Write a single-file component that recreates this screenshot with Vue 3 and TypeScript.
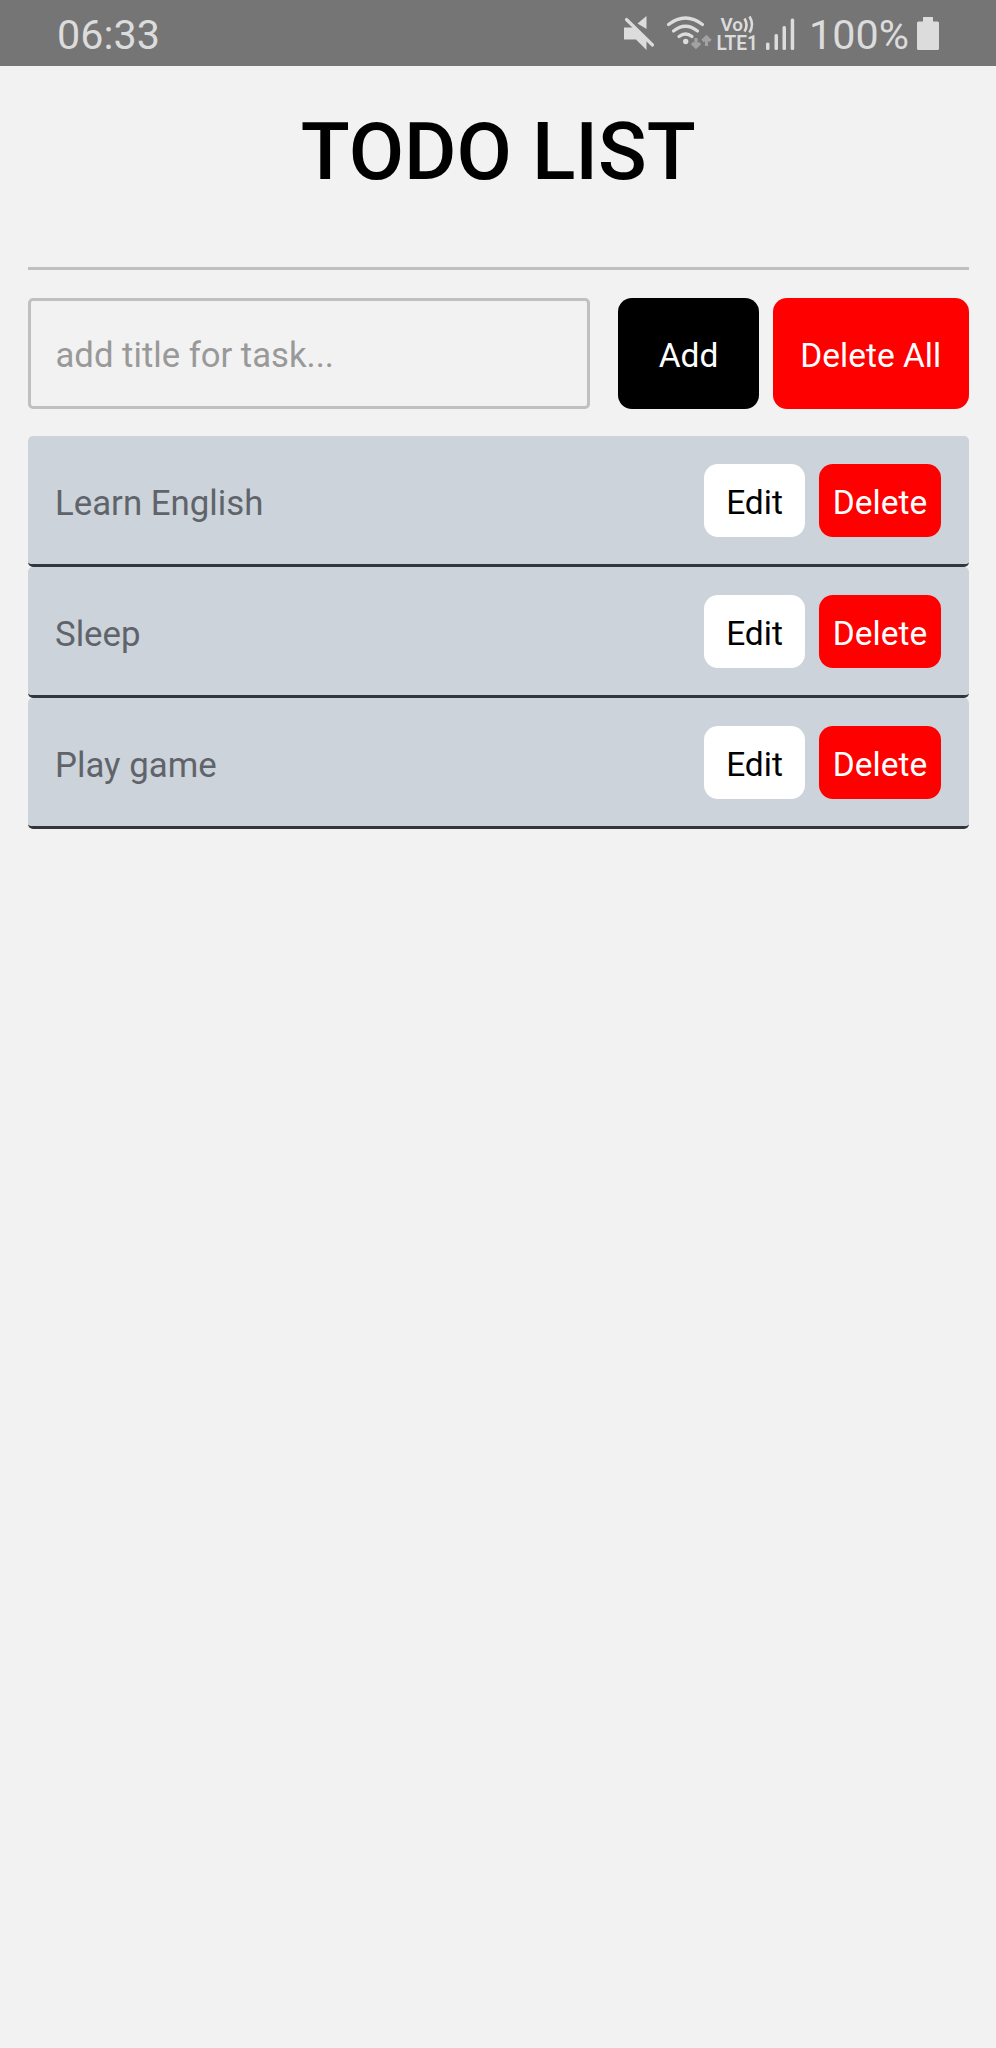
<script setup lang="ts">
import { ref } from 'vue'

interface Task {
  id: number
  title: string
}

const title = ref('')
const tasks = ref<Task[]>([
  { id: 1, title: 'Learn English' },
  { id: 2, title: 'Sleep' },
  { id: 3, title: 'Play game' },
])

function addTask(): void {
  const text = title.value.trim()
  if (!text) return
  tasks.value.push({ id: Date.now(), title: text })
  title.value = ''
}

function editTask(task: Task): void {
  title.value = task.title
  removeTask(task.id)
}

function removeTask(id: number): void {
  tasks.value = tasks.value.filter((t) => t.id !== id)
}

function clearTasks(): void {
  tasks.value = []
}
</script>

<template>
  <div class="screen">
    <header class="status">
      <span class="clock">06:33</span>
      <svg class="indicators" width="180" height="66" viewBox="620 0 180 66" fill="#dcdcdc">
        <!-- muted speaker -->
        <path d="M624 27.500h10.500l12 11.500v11l-10.500-10.500h-12z" />
        <path d="M637.500 23.500l9-7.500v13z" />
        <path d="M626.500 19.500l26 25.500" stroke="#dcdcdc" stroke-width="3.200" stroke-linecap="round" />
        <!-- wifi -->
        <g fill="none" stroke="#dcdcdc" stroke-width="3.200" stroke-linecap="round">
          <path d="M668.500 24.500q17-13 34 0" />
          <path d="M673.500 31q12-9.500 24 0" />
          <path d="M679 36.500q6.500-5 13 0" />
        </g>
        <circle cx="685.700" cy="41.500" r="2.700" />
        <g fill="none" stroke="#a2a2a2" stroke-width="3.200">
          <path d="M696 38v9M692 43l4 4 4-4" />
          <path d="M706.500 46v-9M702.500 41l4-4 4 4" />
        </g>
        <!-- voice over LTE -->
        <g class="volte">
          <text x="720.500" y="31" font-size="18.500" textLength="22.500" lengthAdjust="spacingAndGlyphs">Vo</text>
          <text x="716.500" y="50" font-size="19.500" textLength="41.500" lengthAdjust="spacingAndGlyphs">LTE1</text>
        </g>
        <g fill="none" stroke="#dcdcdc" stroke-width="2.600">
          <path d="M744.500 18.500q4 6.500 0 13" />
          <path d="M749.500 16.500q5 8 0 16" />
        </g>
        <!-- signal strength -->
        <rect x="766" y="42.500" width="3.500" height="7.500" rx="1.500" />
        <rect x="774.500" y="34" width="3.500" height="16" rx="1.500" />
        <rect x="782.500" y="26" width="3.500" height="24" rx="1.500" />
        <rect x="790.700" y="18.500" width="3.500" height="31.500" rx="1.500" />
      </svg>
      <span class="percent">100%</span>
      <svg class="battery" width="24" height="35" viewBox="0 0 24 35" fill="#dcdcdc">
        <path d="M7 1h10v4.500h4.500q1.500 0 1.500 1.500v25.500q0 1.500-1.500 1.500h-19q-1.500 0-1.500-1.500v-25.500q0-1.500 1.500-1.500h4.500z" />
      </svg>
    </header>

    <main class="content">
      <h1 class="heading">TODO LIST</h1>

      <form class="entry" @submit.prevent="addTask">
        <input v-model="title" class="field" type="text" placeholder="add title for task..." />
        <button class="btn add" type="submit">Add</button>
        <button class="btn delete-all" type="button" @click="clearTasks">Delete All</button>
      </form>

      <ul class="tasks">
        <li v-for="task in tasks" :key="task.id" class="task">
          <span class="task-title">{{ task.title }}</span>
          <button class="btn edit" type="button" @click="editTask(task)">Edit</button>
          <button class="btn delete" type="button" @click="removeTask(task.id)">Delete</button>
        </li>
      </ul>
    </main>
  </div>
</template>

<style>
body {
  margin: 0;
  background: #f2f2f2;
}
</style>

<style scoped>
.screen {
  min-height: 2048px;
  background: #f2f2f2;
  font-family: Roboto, 'Liberation Sans', sans-serif;
}

.status {
  display: flex;
  align-items: flex-start;
  box-sizing: border-box;
  height: 66px;
  padding: 0 56px 0 57px;
  background: #757575;
  color: #dcdcdc;
  font-size: 41.3px;
  line-height: 70px;
}

.clock {
  flex: 1;
}

.indicators {
  flex: none;
}

.volte {
  font-family: Roboto, sans-serif;
  font-weight: 600;
}

.percent {
  width: 106px;
  margin-left: 9px;
  white-space: nowrap;
}

.battery {
  margin: 16px 0 0 1px;
}

.content {
  padding: 0 27.5px 0 28px;
}

.heading {
  box-sizing: border-box;
  height: 204px;
  margin: 0 0 28px;
  padding-top: 39px;
  border-bottom: 3px solid #c0c0c0;
  color: #000;
  font-size: 80.4px;
  font-weight: 500;
  line-height: 94px;
  text-align: center;
}

.entry {
  display: flex;
  height: 111px;
  margin-bottom: 27px;
}

.field {
  flex: 1;
  min-width: 0;
  box-sizing: border-box;
  margin: 0 28px 0 0;
  padding: 2px 25px 0 24.5px;
  border: 3px solid #c0c0c0;
  border-radius: 5px;
  outline: none;
  background: transparent;
  color: #555;
  font-family: inherit;
  font-size: 34.7px;
}

.field::placeholder {
  color: #999;
  opacity: 1;
}

.btn {
  flex: none;
  margin: 0;
  padding: 4px 0 0;
  border: 0;
  border-radius: 14px;
  font-family: inherit;
  font-size: 33.5px;
  line-height: 40px;
  text-align: center;
  white-space: nowrap;
}

.add {
  width: 141px;
  margin-right: 14px;
  background: #000;
  color: #fff;
}

.delete-all {
  width: 195.5px;
  background: #f00;
  color: #fff;
}

.tasks {
  margin: 0;
  padding: 0;
  list-style: none;
}

.task {
  display: flex;
  align-items: center;
  box-sizing: border-box;
  height: 131px;
  padding: 1px 27.5px 0 27px;
  border-bottom: 3px solid #33363a;
  border-radius: 5px;
  background: #ccd3da;
}

.task-title {
  flex: 1;
  padding-top: 4px;
  color: #60646a;
  font-size: 34.8px;
}

.edit {
  width: 101px;
  height: 73px;
  margin-right: 14px;
  background: #fff;
  color: #000;
}

.delete {
  width: 122px;
  height: 73px;
  background: #f00;
  color: #fff;
}
</style>
